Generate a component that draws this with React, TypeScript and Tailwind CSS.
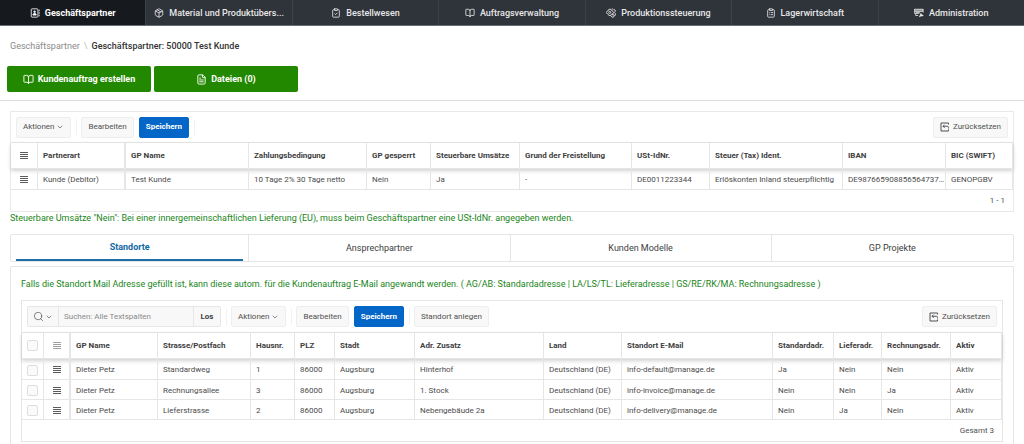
import React from 'react';
import { BookOpen, ChevronDown, ClipboardCheck, ClipboardList, FileText, Package, Search } from 'lucide-react';
import clsx from 'clsx';

type IconProps = { className?: string };

const AddressBookIcon: React.FC<IconProps> = ({ className }) => (
  <svg viewBox="0 0 24 24" fill="none" stroke="currentColor" strokeWidth="2" className={className} aria-hidden="true">
    <rect x="3" y="2" width="16" height="20" rx="2" />
    <path d="M22 4v4M22 10v4M22 16v4" />
    <circle cx="11" cy="9" r="2" fill="currentColor" />
    <path d="M7 17c0-3 1.500-4 4-4s4 1 4 4z" fill="currentColor" />
  </svg>
);

const GearsIcon: React.FC<IconProps> = ({ className }) => (
  <svg viewBox="0 0 24 24" fill="none" stroke="currentColor" strokeWidth="2" className={className} aria-hidden="true">
    <path d="M7 3h5l1 3 3 1 2 4-2 3-3 1-1 3H7l-1-3-3-1-2-3 2-4 3-1z" />
    <circle cx="9" cy="10.500" r="2.500" />
    <path d="M14 3l3-1 2 2 3 1v4l-2 2M20 11l3 3-1 4-3 1-1 3h-4l-2-3" />
    <circle cx="17" cy="16" r="1.500" />
  </svg>
);

const ServerWrenchIcon: React.FC<IconProps> = ({ className }) => (
  <svg viewBox="0 0 24 24" fill="none" stroke="currentColor" strokeWidth="2" className={className} aria-hidden="true">
    <path d="M1 3h21v5H1z" fill="currentColor" fillOpacity=".5" />
    <path d="M22 8v3M1 8v5h12M4 13v5h6" />
    <path d="M4 10.500h10" />
    <path d="M13 21l6-6M17 13a3 3 0 0 0 5 4" strokeWidth="3" />
  </svg>
);

const RowMenuIcon: React.FC<IconProps> = ({ className }) => (
  <svg viewBox="0 0 8 8" fill="currentColor" className={className} aria-hidden="true">
    <path d="M0 0h8v1H0zM0 2h8v1H0zM0 4h8v1H0zM0 6h8v1H0z" />
  </svg>
);

const ResetIcon: React.FC<IconProps> = ({ className }) => (
  <svg viewBox="0 0 20 20" fill="none" stroke="currentColor" strokeWidth="2" className={className} aria-hidden="true">
    <path d="M17 5V2H2v16h15v-3" />
    <path d="M9 5.500L6 8.500l3 3M6 8.500h8.500a2.500 2.500 0 0 1 2.500 2.500v2" />
  </svg>
);

const navItems = [
  { label: 'Geschäftspartner', Icon: AddressBookIcon },
  { label: 'Material und Produktübers...', Icon: Package },
  { label: 'Bestellwesen', Icon: ClipboardCheck },
  { label: 'Auftragsverwaltung', Icon: BookOpen },
  { label: 'Produktionssteuerung', Icon: GearsIcon },
  { label: 'Lagerwirtschaft', Icon: ClipboardList },
  { label: 'Administration', Icon: ServerWrenchIcon },
];

const partnerColumns = [
  { label: 'Partnerart', width: 'w-[88px]' },
  { label: 'GP Name', width: 'w-[123px]' },
  { label: 'Zahlungsbedingung', width: 'w-[118px]' },
  { label: 'GP gesperrt', width: 'w-[64px]' },
  { label: 'Steuerbare Umsätze', width: 'w-[89px]' },
  { label: 'Grund der Freistellung', width: 'w-[112px]' },
  { label: 'USt-IdNr.', width: 'w-[78px]' },
  { label: 'Steuer (Tax) Ident.', width: 'w-[133px]' },
  { label: 'IBAN', width: 'w-[103px]' },
  { label: 'BIC (SWIFT)', width: 'w-[67px]' },
];

const partnerRow = [
  'Kunde (Debitor)',
  'Test Kunde',
  '10 Tage 2% 30 Tage netto',
  'Nein',
  'Ja',
  '-',
  'DE0011223344',
  'Erlöskonten Inland steuerpflichtig',
  'DE987665908856564737...',
  'GENOPGBV',
];

const locationColumns = [
  { label: 'GP Name', width: 'w-[87px]' },
  { label: 'Strasse/Postfach', width: 'w-[93px]' },
  { label: 'Hausnr.', width: 'w-[44px]' },
  { label: 'PLZ', width: 'w-[40px]' },
  { label: 'Stadt', width: 'w-[80px]' },
  { label: 'Adr. Zusatz', width: 'w-[129px]' },
  { label: 'Land', width: 'w-[78px]' },
  { label: 'Standort E-Mail', width: 'w-[151px]' },
  { label: 'Standardadr.', width: 'w-[61px]' },
  { label: 'Lieferadr.', width: 'w-[48px]' },
  { label: 'Rechnungsadr.', width: 'w-[69px]' },
  { label: 'Aktiv', width: 'w-[51px]' },
];

const locationRows = [
  ['Dieter Petz', 'Standardweg', '1', '86000', 'Augsburg', 'Hinterhof', 'Deutschland (DE)', 'info-default@manage.de', 'Ja', 'Nein', 'Nein', 'Aktiv'],
  ['Dieter Petz', 'Rechnungsallee', '3', '86000', 'Augsburg', '1. Stock', 'Deutschland (DE)', 'info-invoice@manage.de', 'Nein', 'Nein', 'Ja', 'Aktiv'],
  ['Dieter Petz', 'Lieferstrasse', '2', '86000', 'Augsburg', 'Nebengebäude 2a', 'Deutschland (DE)', 'info-delivery@manage.de', 'Nein', 'Ja', 'Nein', 'Aktiv'],
];

const tabs = [
  { label: 'Standorte', grow: 'grow-[228]' },
  { label: 'Ansprechpartner', grow: 'grow-[251]' },
  { label: 'Kunden Modelle', grow: 'grow-[251]' },
  { label: 'GP Projekte', grow: 'grow-[232]' },
];

const headRow = 'h-[26px] shadow-[0_2px_4px_rgba(0,0,0,0.18)]';
const headCell = 'border-r border-b border-[#e6e6e6] p-0 text-left font-bold text-[#404040]';
const bodyCell = 'border-r border-b border-[#e6e6e6] px-0 pt-0.5 pb-0 text-[#4c4c4c]';

const ToolButton: React.FC<{ primary?: boolean; children: React.ReactNode }> = ({ primary, children }) => (
  <button
    type="button"
    className={clsx(
      'flex h-[21px] items-center rounded-xs border px-1.5 whitespace-nowrap',
      primary ? 'border-[#0467c8] bg-[#0467c8] font-bold text-white' : 'border-[#eeeeee] bg-[#f8f8f8] text-[#505050]'
    )}
  >
    {children}
  </button>
);

const Divider = () => <span className="mr-1 ml-[5px] h-4 w-px bg-[#f2f2f2]" />;

const App: React.FC = () => {
  return (
    <div className="flex min-h-screen flex-col bg-white font-[Roboto,'Open_Sans',sans-serif] text-[8px] leading-3 text-[#404040]">
      {/* Main navigation */}
      <nav className="flex h-[26px] border-b border-[#6b6e71] bg-[#2f333a] text-[9px] font-medium text-[#e8e8e8]">
        {navItems.map(({ label, Icon }, i) => (
          <a
            key={label}
            href="#"
            className={clsx(
              'flex min-w-0 flex-1 items-center justify-center gap-[5px] whitespace-nowrap',
              i === 0 ? 'bg-[#16191d] font-bold text-white' : 'border-l border-[#3d4148]'
            )}
          >
            <Icon className="size-[10px] shrink-0" />
            {label}
          </a>
        ))}
      </nav>

      {/* Breadcrumb and page actions */}
      <header className="border-b border-[#dddddd] px-[7px] pb-2">
        <div className="flex gap-1 px-[3px] pt-[14px] text-[9px]">
          <a href="#" className="text-[#8a8a8a]">Geschäftspartner</a>
          <span className="text-[#bbbbbb]">\</span>
          <span className="font-medium text-[#333333]">Geschäftspartner: 50000 Test Kunde</span>
        </div>
        <div className="mt-[14px] flex gap-[3px] text-[9px] font-bold text-white">
          <button type="button" className="flex h-[26px] w-36 items-center justify-center gap-1 rounded-xs bg-[#228800]">
            <BookOpen className="size-[11px]" /> Kundenauftrag erstellen
          </button>
          <button type="button" className="flex h-[26px] w-36 items-center justify-center gap-1 rounded-xs bg-[#228800]">
            <FileText className="size-[11px]" /> Dateien (0)
          </button>
        </div>
      </header>

      <main className="flex flex-1 flex-col px-[10px] pt-[10px]">
        {/* Business partner grid */}
        <section className="border border-[#e9e9e9]">
          <div className="flex h-[30px] items-center px-[5px]">
            <ToolButton>Aktionen <ChevronDown className="ml-0.5 size-2" /></ToolButton>
            <Divider />
            <ToolButton>Bearbeiten</ToolButton>
            <span className="w-[5px]" />
            <ToolButton primary>Speichern</ToolButton>
            <Divider />
            <span className="flex-1" />
            <ToolButton><ResetIcon className="mr-[3px] size-[10px]" /> Zurücksetzen</ToolButton>
          </div>
          <table className="w-full table-fixed border-separate border-spacing-0 border-t border-[#e6e6e6]">
            <thead>
              <tr className={headRow}>
                <th className={clsx(headCell, 'w-[27px]')}>
                  <RowMenuIcon className="mx-auto size-2 text-[#5c5c5c]" />
                </th>
                {partnerColumns.map((col, i) => (
                  <th key={col.label} className={clsx(headCell, col.width, i === 0 && 'border-r-2')}>
                    <div className="truncate pl-[5px]">{col.label}</div>
                  </th>
                ))}
              </tr>
            </thead>
            <tbody>
              <tr className="h-[21px]">
                <td className={bodyCell}>
                  <RowMenuIcon className="mx-auto size-2 text-[#5c5c5c]" />
                </td>
                {partnerRow.map((value, i) => (
                  <td key={i} className={clsx(bodyCell, i === 0 && 'border-r-2')}>
                    <div className="truncate pl-[5px]">{value}</div>
                  </td>
                ))}
              </tr>
            </tbody>
          </table>
          <div className="flex h-[21px] items-center justify-end pr-2 text-[#505050]">1 - 1</div>
        </section>

        <p className="text-[9px] text-[#208520]">
          Steuerbare Umsätze "Nein": Bei einer innergemeinschaftlichen Lieferung (EU), muss beim Geschäftspartner eine USt-IdNr. angegeben werden.
        </p>

        {/* Tabs */}
        <div role="tablist" className="mt-[10px] flex h-7 rounded-xs border border-[#e6e6e6] text-[9px]">
          {tabs.map((tab, i) => (
            <button
              key={tab.label}
              type="button"
              role="tab"
              aria-selected={i === 0}
              className={clsx('flex basis-0 px-[5px]', tab.grow, i > 0 && 'border-l border-[#e6e6e6]')}
            >
              <span
                className={clsx(
                  'flex h-full flex-1 items-center justify-center',
                  i === 0 && 'border-b-2 border-[#1d6fa8] font-bold text-[#1268a4]'
                )}
              >
                {tab.label}
              </span>
            </button>
          ))}
        </div>

        {/* Locations */}
        <div className="mt-1 flex-1 rounded-t-xs border border-b-0 border-[#e6e6e6] px-[10px] pt-[11px]">
          <p className="text-[9px] text-[#208520]">
            Falls die Standort Mail Adresse gefüllt ist, kann diese autom. für die Kundenauftrag E-Mail angewandt werden. ( AG/AB: Standardadresse | LA/LS/TL: Lieferadresse | GS/RE/RK/MA: Rechnungsadresse )
          </p>
          <section className="mt-[10px] border border-[#e6e6e6]">
            <div className="flex h-[31px] items-center px-[5px]">
              <div className="flex h-[21px] rounded-xs border border-[#e6e6e6] bg-[#f8f8f8] text-[#505050]">
                <button type="button" aria-label="Suchspalte" className="flex w-[31px] items-center justify-center gap-px border-r border-[#e6e6e6]">
                  <Search className="size-[11px]" strokeWidth={1.5} />
                  <ChevronDown className="size-2" />
                </button>
                <input
                  type="text"
                  aria-label="Suchen"
                  placeholder="Suchen: Alle Textspalten"
                  className="w-[134px] px-[5px] placeholder:text-[#8a8a8a]"
                />
                <button type="button" className="w-[27px] border-l border-[#e6e6e6] font-bold text-[#404040]">Los</button>
              </div>
              <Divider />
              <ToolButton>Aktionen <ChevronDown className="ml-0.5 size-2" /></ToolButton>
              <Divider />
              <ToolButton>Bearbeiten</ToolButton>
              <span className="w-[5px]" />
              <ToolButton primary>Speichern</ToolButton>
              <Divider />
              <ToolButton>Standort anlegen</ToolButton>
              <span className="flex-1" />
              <ToolButton><ResetIcon className="mr-[3px] size-[10px]" /> Zurücksetzen</ToolButton>
            </div>
            <table className="w-full table-fixed border-separate border-spacing-0 border-t border-[#e6e6e6]">
              <thead>
                <tr className={headRow}>
                  <th className={clsx(headCell, 'w-[22px]')}>
                    <input type="checkbox" aria-label="Alle auswählen" className="mx-auto block size-[11px] appearance-none rounded-xs border border-[#dedede] bg-[#fafafa]" />
                  </th>
                  <th className={clsx(headCell, 'w-[27px] border-r-2')}>
                    <RowMenuIcon className="mx-auto size-2 text-[#a0a0a0]" />
                  </th>
                  {locationColumns.map(col => (
                    <th key={col.label} className={clsx(headCell, col.width)}>
                      <div className="truncate pl-[5px]">{col.label}</div>
                    </th>
                  ))}
                </tr>
              </thead>
              <tbody>
                {locationRows.map((row, r) => (
                  <tr key={r} className={r === 0 ? 'h-[21px]' : 'h-5'}>
                    <td className={bodyCell}>
                      <input type="checkbox" aria-label="Zeile auswählen" className="mx-auto block size-[11px] appearance-none rounded-xs border border-[#dedede] bg-[#fafafa]" />
                    </td>
                    <td className={clsx(bodyCell, 'border-r-2')}>
                      <RowMenuIcon className="mx-auto size-2 text-[#5c5c5c]" />
                    </td>
                    {row.map((value, i) => (
                      <td key={i} className={bodyCell}>
                        <div className="truncate pl-[5px]">{value}</div>
                      </td>
                    ))}
                  </tr>
                ))}
              </tbody>
            </table>
            <div className="flex h-[21px] items-center justify-end pr-2 text-[#505050]">Gesamt 3</div>
          </section>
        </div>
      </main>
    </div>
  );
};

export default App;
